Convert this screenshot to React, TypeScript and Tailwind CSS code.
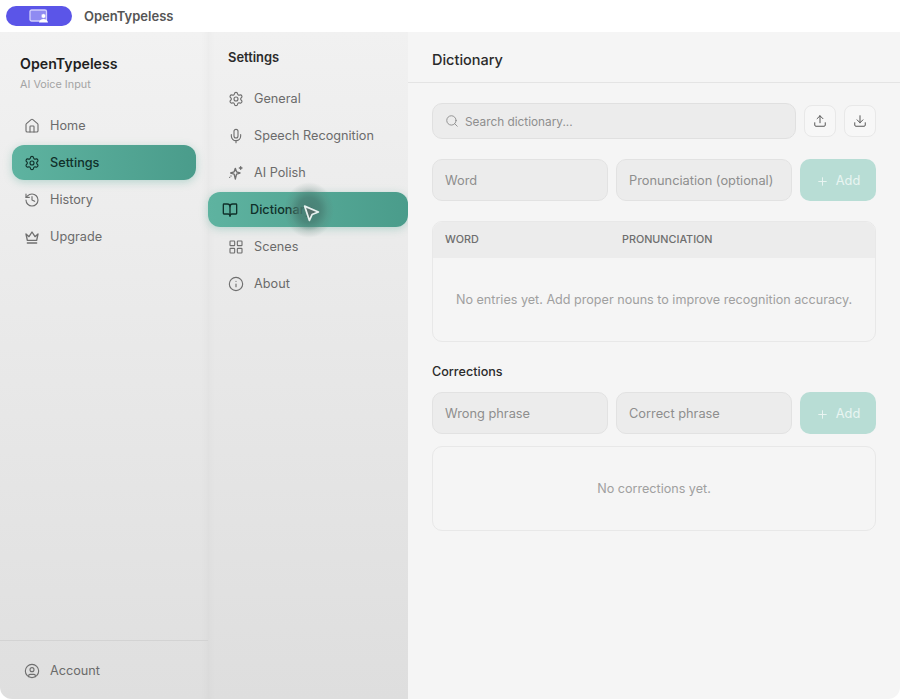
import { BookOpen, CircleUser, Download, History, House, Info, LayoutGrid, Mic, Plus, Search, Settings, Upload } from "lucide-react";
import type { ComponentType } from "react";

type IconProps = { className?: string; strokeWidth?: number };
type Item = { label: string; icon: ComponentType<IconProps> };

function CrownIcon({ className }: IconProps) {
  return (
    <svg className={className} viewBox="0 0 24 24" fill="none" stroke="currentColor" strokeWidth={2} strokeLinejoin="round" strokeLinecap="round">
      <path d="M3 7.5l4.5 4L12 4.5l4.5 7 4.5-4-2 9.5H5z" />
      <path d="M5 21h14" />
    </svg>
  );
}

function PolishIcon({ className }: IconProps) {
  return (
    <svg className={className} viewBox="0 0 24 24" fill="none" stroke="currentColor" strokeWidth={2} strokeLinejoin="round" strokeLinecap="round">
      <path d="M11 5l1.8 5.2L18 12l-5.2 1.8L11 21l-1.8-7.2L4 12l5.2-1.8z" />
      <path d="M19 2.5v4M17 4.5h4" />
      <path d="M2.5 18.5h.01M4.5 16.5h.01" />
    </svg>
  );
}

const mainNav: Item[] = [
  { label: "Home", icon: House },
  { label: "Settings", icon: Settings },
  { label: "History", icon: History },
  { label: "Upgrade", icon: CrownIcon },
];

const settingsNav: Item[] = [
  { label: "General", icon: Settings },
  { label: "Speech Recognition", icon: Mic },
  { label: "AI Polish", icon: PolishIcon },
  { label: "Dictionary", icon: BookOpen },
  { label: "Scenes", icon: LayoutGrid },
  { label: "About", icon: Info },
];

function AppLogo() {
  return (
    <svg width="20" height="14" viewBox="0 0 20 14" fill="none">
      <rect x="1" y="1" width="16.5" height="11" rx="1.6" fill="#8f8bf2" stroke="#d2d0fb" strokeWidth="1.3" />
      <circle cx="14.5" cy="7" r="2.3" fill="#ffffff" stroke="#8f8bf2" strokeWidth="0.5" />
      <path d="M10 13.6c.3-2.4 2.2-3.6 4.5-3.6s4.2 1.2 4.5 3.6z" fill="#ffffff" />
    </svg>
  );
}

function NavRow({ item, active, wide }: { item: Item; active: boolean; wide?: boolean }) {
  const Icon = item.icon;
  if (active) {
    return (
      <div
        className={`flex h-[35px] items-center rounded-[12px] bg-gradient-to-r from-[#5eb3a0] to-[#4a9c8b] shadow-[0_2px_8px_rgba(76,165,145,0.35)] ${
          wide ? "-mx-5 gap-[12px] pl-[14px]" : "gap-[10px] pl-[12px]"
        }`}
      >
        <Icon className="h-4 w-4 text-[#10302a]" strokeWidth={wide ? 2 : 1.7} />
        <span className="text-[12.7px] font-medium text-[#10302a]">{item.label}</span>
      </div>
    );
  }
  return (
    <div className="flex h-[35px] items-center gap-[10px] pl-[12px]">
      <Icon className="h-4 w-4 text-[#6f6f6f]" strokeWidth={1.7} />
      <span className="text-[12.7px] text-[#6b6b6b]">{item.label}</span>
    </div>
  );
}

function Field({ label }: { label: string }) {
  return (
    <div className="flex h-[42px] flex-1 items-center rounded-[10px] border border-[#e2e2e2] bg-[#ececec] px-3 pt-[2px] text-[12.8px] text-[#8e8e8e]">
      {label}
    </div>
  );
}

function AddButton() {
  return (
    <div className="flex h-[42px] w-[76px] items-center justify-center gap-[7px] rounded-[10px] bg-[#b8ddd5] pt-[2px] text-[12.8px] text-[#e9f5f2]">
      <Plus className="h-[13px] w-[13px]" strokeWidth={1.8} />
      Add
    </div>
  );
}

export default function App() {
  return (
    <div className="flex h-[700px] w-[900px] flex-col overflow-hidden bg-white font-['Inter',sans-serif]">
      <div className="flex h-[32px] shrink-0 items-center pl-[6px]">
        <div className="flex h-[20px] w-[66px] items-center justify-center rounded-full bg-[#5b55e8]">
          <AppLogo />
        </div>
        <span className="ml-3 pt-[1px] text-[13px] font-semibold text-[#555555]">OpenTypeless</span>
      </div>

      <div className="relative flex h-[667px] overflow-hidden rounded-b-[12px]">
        {/* main sidebar */}
        <aside className="flex w-[208px] shrink-0 flex-col bg-gradient-to-b from-[#f2f2f2] to-[#dfdfdf] shadow-[inset_-6px_0_8px_-6px_rgba(0,0,0,0.04)]">
          <div className="px-5 pt-[22px]">
            <div className="text-[14.2px] font-semibold leading-[20px] text-[#1f1f1f]">OpenTypeless</div>
            <div className="mt-[4px] text-[10.8px] leading-[14px] text-[#a3a3a3]">AI Voice Input</div>
          </div>
          <nav className="mt-[16px] flex flex-col gap-[2px] px-[12px]">
            {mainNav.map((item) => (
              <NavRow key={item.label} item={item} active={item.label === "Settings"} />
            ))}
          </nav>
          <div className="mt-auto flex h-[59px] items-center gap-[10px] border-t border-[#d3d3d3] pt-[2px] pl-[24px]">
            <CircleUser className="h-4 w-4 text-[#6f6f6f]" strokeWidth={1.7} />
            <span className="text-[12.7px] text-[#6b6b6b]">Account</span>
          </div>
        </aside>

        {/* settings sidebar */}
        <aside className="w-[200px] shrink-0 bg-gradient-to-b from-[#f1f1f1] to-[#dedede] shadow-[inset_6px_0_8px_-6px_rgba(0,0,0,0.04)]">
          <div className="pl-5 pt-[18px] text-[12.9px] font-semibold leading-[16px] text-[#2b2b2b]">Settings</div>
          <nav className="mt-[15px] flex flex-col gap-[2px] px-2">
            {settingsNav.map((item) => (
              <div key={item.label} className={item.label === "Dictionary" ? "mx-3" : ""}>
                <NavRow item={item} active={item.label === "Dictionary"} wide />
              </div>
            ))}
          </nav>
        </aside>

        {/* dictionary page */}
        <main className="flex-1 bg-[#f5f5f5]">
          <div className="flex h-[51px] items-center border-b border-[#e4e4e4] px-6 pt-[6px] text-[14.5px] font-medium text-[#2a2a2a]">
            Dictionary
          </div>
          <div className="px-6 pt-5">
            <div className="flex items-center">
              <div className="flex h-[36px] w-[364px] items-center gap-[6px] rounded-[10px] border border-[#e0e0e0] bg-[#ececec] pl-3 pt-[3px] text-[11.8px] text-[#8e8e8e]">
                <Search className="-mt-[3px] h-[14px] w-[14px] text-[#888888]" strokeWidth={1.5} />
                Search dictionary...
              </div>
              <div className="ml-2 flex h-[32px] w-[32px] items-center justify-center rounded-[8px] border border-[#e8e8e8] bg-[#f7f7f7]">
                <Upload className="h-[14px] w-[14px] text-[#555555]" strokeWidth={1.7} />
              </div>
              <div className="ml-2 flex h-[32px] w-[32px] items-center justify-center rounded-[8px] border border-[#e8e8e8] bg-[#f7f7f7]">
                <Download className="h-[14px] w-[14px] text-[#555555]" strokeWidth={1.7} />
              </div>
            </div>

            <div className="mt-5 flex gap-2">
              <Field label="Word" />
              <Field label="Pronunciation (optional)" />
              <AddButton />
            </div>

            <div className="mt-5 h-[121px] overflow-hidden rounded-[10px] border border-[#e8e8e8]">
              <div className="flex h-[36px] items-center bg-[#ececec] pl-3 pt-[1px] text-[10.8px] font-medium text-[#6e6e6e]">
                <span className="w-[177px]">WORD</span>
                <span>PRONUNCIATION</span>
              </div>
              <div className="flex h-[83px] items-center justify-center pt-[2px] text-[12.6px] text-[#a0a0a0]">
                No entries yet. Add proper nouns to improve recognition accuracy.
              </div>
            </div>

            <div className="mt-[22px] text-[12.6px] font-medium leading-[16px] text-[#2b2b2b]">Corrections</div>
            <div className="mt-[12px] flex gap-2">
              <Field label="Wrong phrase" />
              <Field label="Correct phrase" />
              <AddButton />
            </div>
            <div className="mt-3 flex h-[85px] items-center justify-center rounded-[10px] border border-[#e8e8e8] pt-[2px] text-[12.6px] text-[#a0a0a0]">
              No corrections yet.
            </div>
          </div>
        </main>

        {/* pointer with its click glow, lies over the nav row */}
        <div className="pointer-events-none absolute left-[284px] top-[150px] h-[56px] w-[50px] rounded-full bg-[radial-gradient(closest-side,rgba(72,125,114,0.95)_0%,rgba(72,125,114,0.75)_45%,rgba(90,120,112,0.2)_75%,rgba(90,120,112,0)_100%)]" />
        <svg className="pointer-events-none absolute left-[302px] top-[172px]" width="18" height="18" viewBox="0 0 17 17">
          <path d="M2.5 2 L15.5 7.5 L9.5 10 L7 15.5 Z" fill="#56706b" stroke="#e8f1ef" strokeWidth="1.6" strokeLinejoin="round" />
        </svg>
      </div>
    </div>
  );
}
